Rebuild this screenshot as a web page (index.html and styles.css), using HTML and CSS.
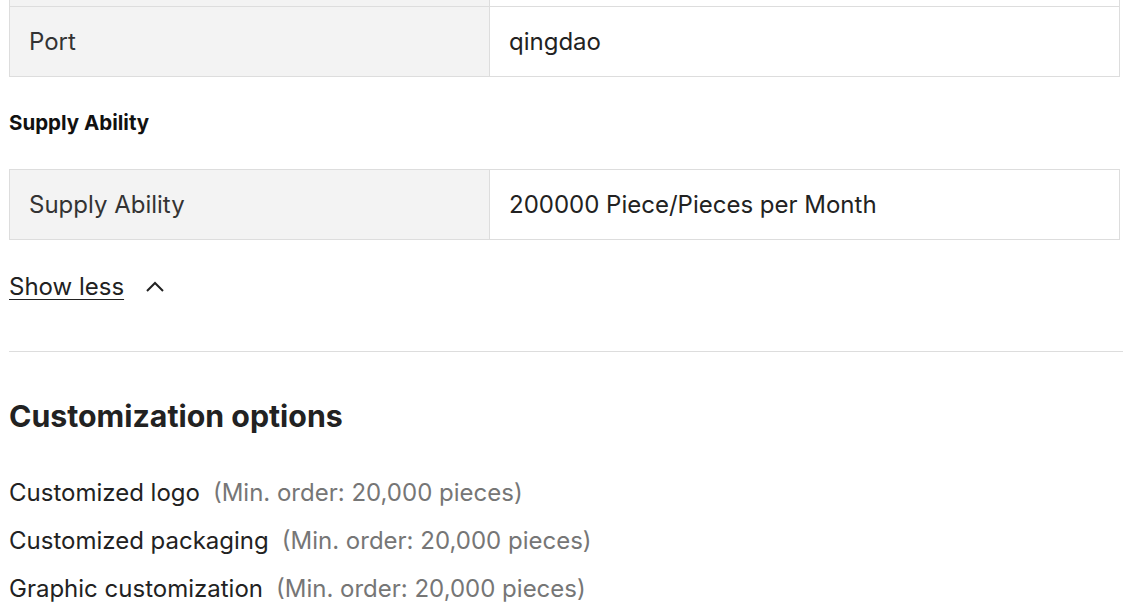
FILE: index.html
```html
<!DOCTYPE html>
<html>
<head>
<meta charset="utf-8">
<link rel="stylesheet" href="styles.css">
</head>
<body>
<div class="page">
  <table class="attr-table">
    <tr><td class="label"></td><td class="value"></td></tr>
    <tr><td class="label">Port</td><td class="value">qingdao</td></tr>
  </table>
  <h4 class="group-title">Supply Ability</h4>
  <table class="attr-table">
    <tr><td class="label">Supply Ability</td><td class="value">200000 Piece/Pieces per Month</td></tr>
  </table>
  <div class="toggle">
    <a class="toggle-link">Show less</a>
    <svg class="chevron" width="20" height="20" viewBox="0 0 20 20"><path d="M2 14 L10 6 L18 14" fill="none" stroke="#222" stroke-width="2"/></svg>
  </div>
  <hr class="divider">
  <h2 class="section-title">Customization options</h2>
  <ul class="custom-list">
    <li><span class="opt">Customized logo</span><span class="min">(Min. order: 20,000 pieces)</span></li>
    <li><span class="opt">Customized packaging</span><span class="min">(Min. order: 20,000 pieces)</span></li>
    <li><span class="opt">Graphic customization</span><span class="min">(Min. order: 20,000 pieces)</span></li>
  </ul>
</div>
</body>
</html>
```
FILE: styles.css
```css
html, body {
  margin: 0;
  padding: 0;
  background: #fff;
  overflow: hidden;
}
body {
  font-family: Inter, "Noto Sans", sans-serif;
  color: #222;
}
.page {
  padding-left: 9px;
  margin-top: -64px;
}
.attr-table {
  width: 1111px;
  border-collapse: collapse;
  font-size: 24px;
}
.attr-table td {
  border: 1px solid #dddddd;
  height: 69px;
  padding: 0 19px;
  vertical-align: middle;
  line-height: 30px;
}
.attr-table .label {
  width: 441px;
  background: #f3f3f3;
  color: #333;
}
.attr-table .value {
  color: #222;
}
.group-title {
  font-size: 20.5px;
  font-weight: 700;
  margin: 0;
  padding-top: 33px;
  padding-bottom: 33px;
  line-height: 26px;
  color: #111;
}
.toggle {
  display: flex;
  align-items: center;
  gap: 21px;
  margin-top: 32px;
  height: 30px;
}
.toggle-link {
  font-size: 24px;
  line-height: 30px;
  text-decoration: underline;
  text-underline-offset: 4px;
  text-decoration-thickness: 1px;
  color: #222;
}
.chevron {
  display: block;
}
.divider {
  border: none;
  border-top: 1px solid #dddddd;
  margin: 49px 0 0 0;
}
.section-title {
  font-size: 30.3px;
  font-weight: 700;
  margin: 46px 0 0 0;
  line-height: 36px;
  color: #222;
}
.custom-list {
  list-style: none;
  margin: 45px 0 0 0;
  padding: 0;
}
.custom-list li {
  font-size: 24px;
  line-height: 28px;
  margin-bottom: 20px;
}
.custom-list .opt {
  color: #222;
  margin-right: 13px;
}
.custom-list .min {
  color: #767676;
}
```
